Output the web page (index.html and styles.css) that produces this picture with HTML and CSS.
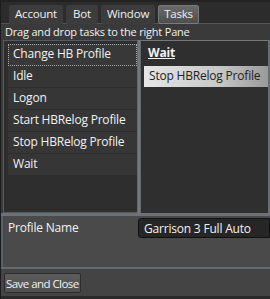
FILE: index.html
```html
<!DOCTYPE html>
<html>
<head>
<meta charset="utf-8">
<link rel="stylesheet" href="styles.css">
</head>
<body>
<div class="win">
  <div class="tabs">
    <span class="tab">Account</span>
    <span class="tab">Bot</span>
    <span class="tab">Window</span>
    <span class="tab active">Tasks</span>
  </div>
  <div class="hint">Drag and drop tasks to the right Pane</div>
  <div class="panes">
    <div class="left">
      <ul class="list">
        <li class="item sel">Change HB Profile</li>
        <li class="item">Idle</li>
        <li class="item">Logon</li>
        <li class="item">Start HBRelog Profile</li>
        <li class="item">Stop HBRelog Profile</li>
        <li class="item">Wait</li>
      </ul>
    </div>
    <div class="vsplit"></div>
    <div class="right">
      <div class="rtitle">Wait</div>
      <div class="ritem">Stop HBRelog Profile</div>
    </div>
  </div>
  <div class="hsplit"></div>
  <div class="props">
    <div class="plabel">Profile Name</div>
    <div class="pinput">Garrison 3 Full Auto</div>
  </div>
  <div class="footer">
    <button class="btn">Save and Close</button>
  </div>
</div>
</body>
</html>
```
FILE: styles.css
```css
* { box-sizing: border-box; }
html, body { margin: 0; padding: 0; }
body {
  width: 270px;
  height: 299px;
  overflow: hidden;
  background: #1e1e1e;
  font-family: "Open Sans", "Noto Sans", sans-serif;
  font-size: 12px;
  letter-spacing: -0.2px;
  color: #f2f2f2;
}
.win {
  width: 270px;
  height: 299px;
  display: flex;
  flex-direction: column;
  background: #3b3b3b;
  border-left: 1px solid #1c1c1c;
}
.win > * { flex-shrink: 0; }
.tabs {
  height: 24px;
  display: flex;
  gap: 3px;
  padding: 3px 0 0 8px;
  background: #2c2c2c;
  border-top: 2px solid #222;
  border-bottom: 1px solid #555;
}
.tab {
  height: 19px;
  padding: 0 6px;
  line-height: 18px;
  font-size: 11.5px;
  background: #3c3c3c;
  border-radius: 2px;
  color: #f0f0f0;
}
.tab.active {
  background: linear-gradient(#6a6a6a, #4e4e4e);
  border: 1px solid #7a7a7a;
  padding: 0 5px;
  line-height: 16px;
}
.tab:nth-child(2) { padding: 0 7px; }
.hint {
  height: 16px;
  line-height: 15px;
  padding-left: 4px;
  font-size: 11px;
  background: #3a3a3a;
}
.panes {
  height: 173px;
  display: flex;
  padding-left: 2px;
  background: #3a3a3a;
}
.left {
  width: 134px;
  background: #2e2e2e;
  border: 1px solid #555a5e;
  border-right: 0;
  padding: 3px 0 0 4px;
}
.list {
  list-style: none;
  margin: 0;
  padding: 0;
}
.item {
  height: 22px;
  line-height: 20px;
  padding-left: 5px;
  background: #363636;
  border-bottom: 1px solid #2c2c2c;
  white-space: nowrap;
}
.item.sel {
  background: #383838;
  border: 1px dotted #aaa;
  padding-left: 4px;
  line-height: 18px;
}
.vsplit {
  width: 4px;
  background: linear-gradient(90deg, #5b6066, #7c8288, #5b6066);
}
.right {
  flex: 1;
  background: #2f2f2f;
  border-top: 1px solid #777;
  border-right: 2px solid #6a6e72;
  padding: 5px 0 0 3px;
}
.rtitle {
  font-weight: bold;
  text-decoration: underline;
  padding-left: 4px;
  height: 20px;
  line-height: 14px;
}
.ritem {
  height: 21px;
  line-height: 20px;
  padding-left: 5px;
  color: #222;
  white-space: nowrap;
  background: linear-gradient(90deg, #e6e6e6, #c8c8c8 60%, #9a9a9a);
}
.hsplit {
  height: 3px;
  background: #6c7278;
}
.props {
  height: 51px;
  display: flex;
  justify-content: space-between;
  align-items: flex-start;
  background: #4a4a4a;
  border-left: 2px solid #5a6066;
  padding-top: 2px;
}
.plabel {
  padding-left: 5px;
  padding-top: 2px;
  line-height: 16px;
}
.pinput {
  width: 132px;
  height: 20px;
  padding-left: 5px;
  line-height: 19px;
  background: #262626;
  border: 1px solid #111;
  border-radius: 3px 0 0 3px;
  white-space: nowrap;
}
.footer {
  height: 32px;
  background: #444;
  border-top: 2px solid #636a70;
  border-bottom: 3px solid #2a2a2a;
  padding: 4px 0 0 3px;
}
.btn {
  height: 20px;
  padding: 0 1px;
  white-space: nowrap;
  font-family: "Open Sans", "Noto Sans", sans-serif;
  font-size: 11.5px;
  letter-spacing: -0.55px;
  color: #f0f0f0;
  background: linear-gradient(#5c5c5c, #505050);
  border: 1px solid #2c2c2c;
  border-radius: 2px;
}
```
